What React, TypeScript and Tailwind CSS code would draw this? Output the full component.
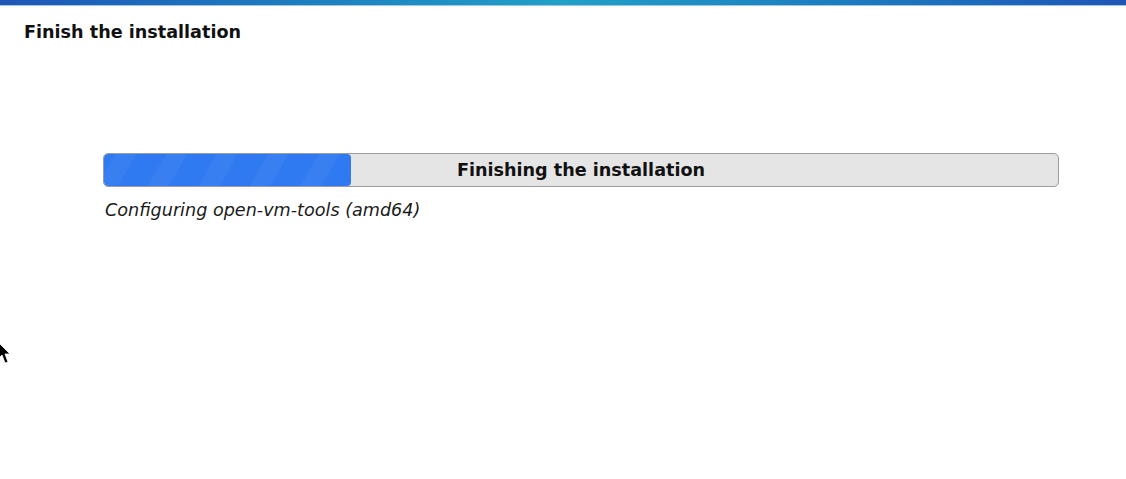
import React from "react";

export default function App() {
  return (
    <div className="relative w-[1126px] h-[479px] bg-white overflow-hidden" style={{ fontFamily: '"DejaVu Sans", sans-serif' }}>
      <div className="h-[5px] bg-gradient-to-r from-[#1f55b5] via-[#22a0c6] to-[#1f55b5]" />
      <div className="h-[1px] bg-[#9fc6ea]" />
      <div className="pl-[24px] pt-[15px] text-[17.6px] font-bold text-[#111] leading-[22px]">Finish the installation</div>
      <div className="pl-[103px] pr-[67px] pt-[110px]">
        <div className="relative h-[34px] rounded-[5px] border border-[#9c9c9c] bg-[#e6e5e6] overflow-hidden">
          <div
            className="absolute left-0 top-0 bottom-0 w-[247px] rounded-[4px] bg-[#2f7af0]"
            style={{
              backgroundImage:
                "repeating-linear-gradient(-60deg, rgba(255,255,255,0) 0px, rgba(255,255,255,0) 26px, rgba(255,255,255,0.045) 26px, rgba(255,255,255,0.045) 44px)",
            }}
          />
          <div className="relative h-full flex items-center justify-center text-[17.6px] font-bold text-[#111]">
            Finishing the installation
          </div>
        </div>
        <div className="pl-[2px] pt-[12px] text-[17.6px] italic text-[#1a1a1a] leading-[22px]">Configuring open-vm-tools (amd64)</div>
      </div>
      <svg className="absolute left-[-2px] top-[342px]" width="14" height="24" viewBox="0 0 14 24">
        <path d="M0 0 L0 17 L4 13 L7 21 L10 20 L7 12 L12 12 Z" fill="#000" stroke="#fff" strokeWidth="0.8" />
      </svg>
    </div>
  );
}
